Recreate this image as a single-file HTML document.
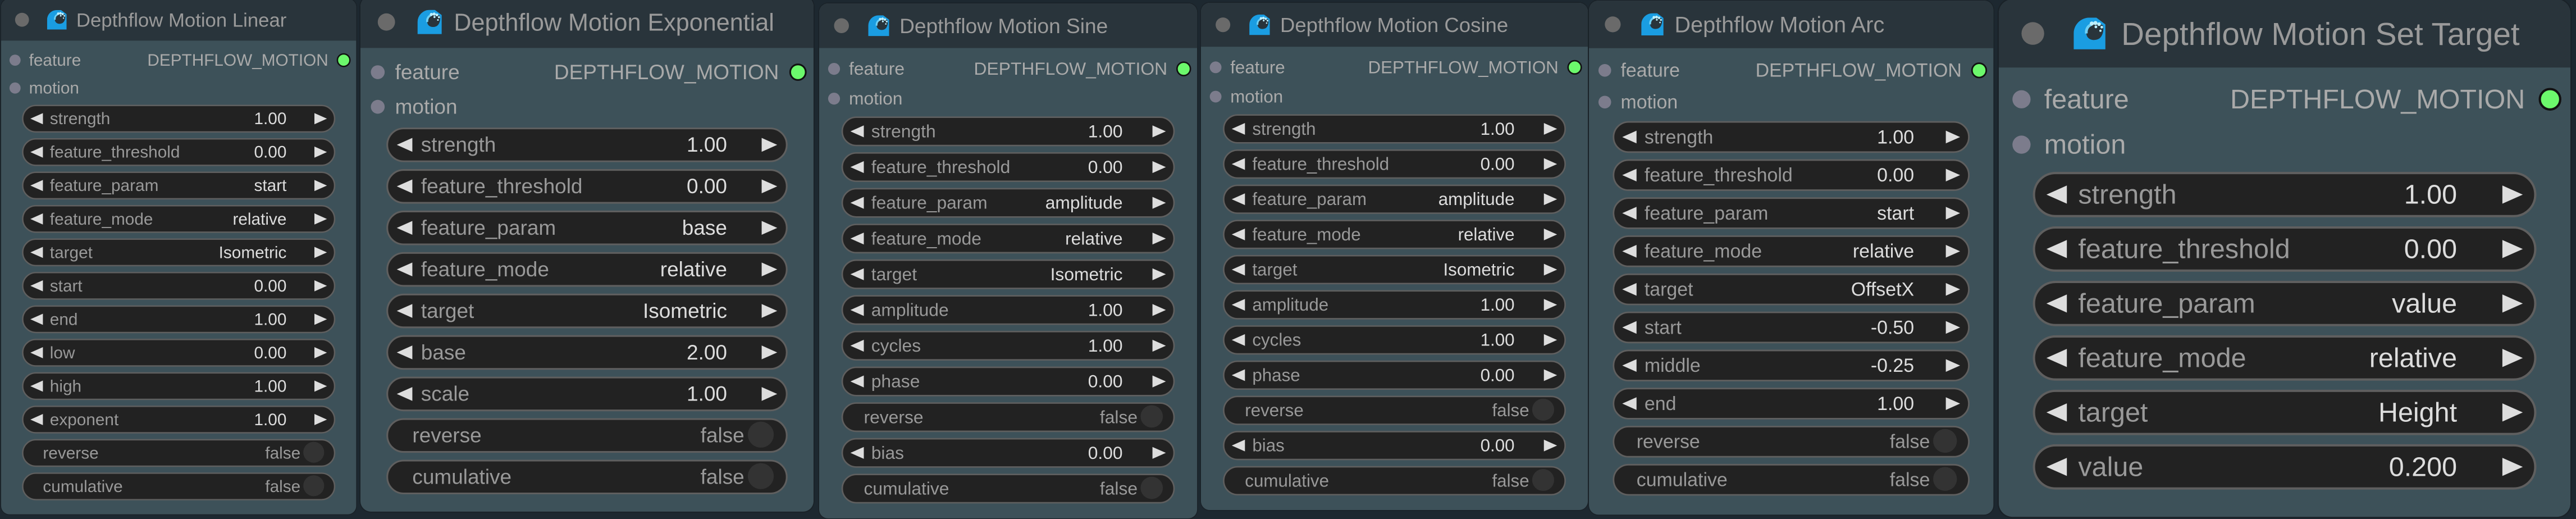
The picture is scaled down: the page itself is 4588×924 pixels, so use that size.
<!DOCTYPE html>
<html><head><meta charset="utf-8">
<style>
html,body{margin:0;padding:0;}
body{width:4588px;height:924px;overflow:hidden;background:#1d2830;position:relative;font-family:"Liberation Sans",Arial,sans-serif;}
.node{position:absolute;transform-origin:0 0;background:#3d5159;border-radius:6px;box-shadow:0 0 0 0.6px #1a2228;}
.title{position:absolute;left:0;top:0;right:0;height:30px;background:#29343b;border-radius:6px 6px 0 0;}
.tdot{position:absolute;left:10px;top:10px;width:10px;height:10px;border-radius:50%;background:#6a6a6a;}
.icon{position:absolute;left:33px;top:8px;width:14px;height:14px;}
.ttext{position:absolute;left:54px;top:0;line-height:30px;font-size:14px;color:#9a9a9a;white-space:nowrap;}
.slot{position:absolute;left:0;right:0;height:20px;font-size:12px;line-height:20px;color:#aaa;}
.slot .d{position:absolute;left:6px;top:6px;width:8px;height:8px;border-radius:50%;background:#7c7c8c;}
.slot .l{position:absolute;left:20px;top:0;}
.slot .o{position:absolute;right:20px;top:0;color:#aaa;}
.slot .od{position:absolute;right:4px;top:5px;width:8px;height:8px;border-radius:50%;background:#6cf86c;border:1px solid #111;}
.w{position:absolute;left:15px;right:15px;height:20px;border-radius:10px;background:#222;border:1px solid #5f5f5f;box-sizing:border-box;font-size:12px;line-height:18px;color:#999;white-space:nowrap;}
.w .la{position:absolute;left:5px;top:5px;width:0;height:0;border-top:4px solid transparent;border-bottom:4px solid transparent;border-right:9px solid #ddd;}
.w .ra{position:absolute;right:5px;top:5px;width:0;height:0;border-top:4px solid transparent;border-bottom:4px solid transparent;border-left:9px solid #ddd;}
.w .lb{position:absolute;left:19px;top:0;}
.w .v{position:absolute;right:34px;top:0;color:#ddd;}
.w.t .lb{left:14px;}
.w.t .v{right:24px;color:#999;}
.w.t .c{position:absolute;right:7px;top:1px;width:15px;height:15px;border-radius:50%;background:#333;}
</style></head><body>

<svg width="0" height="0" style="position:absolute">
<defs>
<symbol id="wave" viewBox="0 0 14 14">
<path d="M0 14 V7 A7 7 0 0 1 7 0 H10 L14 3 V14 Z" fill="#1a9de2"/>
<path d="M13 3.5 C10.5 1.8 6 2.5 5.6 6.5 C5.4 9.5 8.5 10.6 11 9.4 C12.6 8.5 13.4 6 13 3.5Z" fill="#29343b"/>
<path d="M8 3 C6.2 3.6 5.4 5.2 5.6 7" stroke="#6fd0f5" stroke-width="1.2" fill="none"/>
<circle cx="8" cy="2.6" r="0.9" fill="#bdf0ff"/><circle cx="9.6" cy="2.4" r="0.9" fill="#bdf0ff"/><circle cx="11.2" cy="2.9" r="0.8" fill="#bdf0ff"/><circle cx="12.4" cy="4.2" r="0.6" fill="#bdf0ff"/><circle cx="11.8" cy="5.8" r="0.5" fill="#bdf0ff"/><circle cx="9.8" cy="4.1" r="0.6" fill="#bdf0ff"/>
</symbol>
</defs></svg>

<!-- Node 1 -->
<div class="node" style="left:2px;top:-2.5px;width:255px;height:370px;transform:scale(2.48);">
<div class="title"><div class="tdot"></div><svg class="icon"><use href="#wave"/></svg><div class="ttext">Depthflow Motion Linear</div></div>
<div class="slot" style="top:34px"><div class="d"></div><div class="l">feature</div><div class="o">DEPTHFLOW_MOTION</div><div class="od"></div></div>
<div class="slot" style="top:54px"><div class="d"></div><div class="l">motion</div></div>
<div class="w" style="top:76px"><div class="la"></div><div class="lb">strength</div><div class="v">1.00</div><div class="ra"></div></div>
<div class="w" style="top:100px"><div class="la"></div><div class="lb">feature_threshold</div><div class="v">0.00</div><div class="ra"></div></div>
<div class="w" style="top:124px"><div class="la"></div><div class="lb">feature_param</div><div class="v">start</div><div class="ra"></div></div>
<div class="w" style="top:148px"><div class="la"></div><div class="lb">feature_mode</div><div class="v">relative</div><div class="ra"></div></div>
<div class="w" style="top:172px"><div class="la"></div><div class="lb">target</div><div class="v">Isometric</div><div class="ra"></div></div>
<div class="w" style="top:196px"><div class="la"></div><div class="lb">start</div><div class="v">0.00</div><div class="ra"></div></div>
<div class="w" style="top:220px"><div class="la"></div><div class="lb">end</div><div class="v">1.00</div><div class="ra"></div></div>
<div class="w" style="top:244px"><div class="la"></div><div class="lb">low</div><div class="v">0.00</div><div class="ra"></div></div>
<div class="w" style="top:268px"><div class="la"></div><div class="lb">high</div><div class="v">1.00</div><div class="ra"></div></div>
<div class="w" style="top:292px"><div class="la"></div><div class="lb">exponent</div><div class="v">1.00</div><div class="ra"></div></div>
<div class="w t" style="top:316px"><div class="lb">reverse</div><div class="v">false</div><div class="c"></div></div>
<div class="w t" style="top:340px"><div class="lb">cumulative</div><div class="v">false</div><div class="c"></div></div>
</div>

<!-- Node 2 -->
<div class="node" style="left:642px;top:-7px;width:262px;height:298px;transform:scale(3.08);">
<div class="title"><div class="tdot"></div><svg class="icon"><use href="#wave"/></svg><div class="ttext">Depthflow Motion Exponential</div></div>
<div class="slot" style="top:34px"><div class="d"></div><div class="l">feature</div><div class="o">DEPTHFLOW_MOTION</div><div class="od"></div></div>
<div class="slot" style="top:54px"><div class="d"></div><div class="l">motion</div></div>
<div class="w" style="top:76px"><div class="la"></div><div class="lb">strength</div><div class="v">1.00</div><div class="ra"></div></div>
<div class="w" style="top:100px"><div class="la"></div><div class="lb">feature_threshold</div><div class="v">0.00</div><div class="ra"></div></div>
<div class="w" style="top:124px"><div class="la"></div><div class="lb">feature_param</div><div class="v">base</div><div class="ra"></div></div>
<div class="w" style="top:148px"><div class="la"></div><div class="lb">feature_mode</div><div class="v">relative</div><div class="ra"></div></div>
<div class="w" style="top:172px"><div class="la"></div><div class="lb">target</div><div class="v">Isometric</div><div class="ra"></div></div>
<div class="w" style="top:196px"><div class="la"></div><div class="lb">base</div><div class="v">2.00</div><div class="ra"></div></div>
<div class="w" style="top:220px"><div class="la"></div><div class="lb">scale</div><div class="v">1.00</div><div class="ra"></div></div>
<div class="w t" style="top:244px"><div class="lb">reverse</div><div class="v">false</div><div class="c"></div></div>
<div class="w t" style="top:268px"><div class="lb">cumulative</div><div class="v">false</div><div class="c"></div></div>
</div>

<!-- Node 3 -->
<div class="node" style="left:1459px;top:5.6px;width:254px;height:346px;transform:scale(2.65);">
<div class="title"><div class="tdot"></div><svg class="icon"><use href="#wave"/></svg><div class="ttext">Depthflow Motion Sine</div></div>
<div class="slot" style="top:34px"><div class="d"></div><div class="l">feature</div><div class="o">DEPTHFLOW_MOTION</div><div class="od"></div></div>
<div class="slot" style="top:54px"><div class="d"></div><div class="l">motion</div></div>
<div class="w" style="top:76px"><div class="la"></div><div class="lb">strength</div><div class="v">1.00</div><div class="ra"></div></div>
<div class="w" style="top:100px"><div class="la"></div><div class="lb">feature_threshold</div><div class="v">0.00</div><div class="ra"></div></div>
<div class="w" style="top:124px"><div class="la"></div><div class="lb">feature_param</div><div class="v">amplitude</div><div class="ra"></div></div>
<div class="w" style="top:148px"><div class="la"></div><div class="lb">feature_mode</div><div class="v">relative</div><div class="ra"></div></div>
<div class="w" style="top:172px"><div class="la"></div><div class="lb">target</div><div class="v">Isometric</div><div class="ra"></div></div>
<div class="w" style="top:196px"><div class="la"></div><div class="lb">amplitude</div><div class="v">1.00</div><div class="ra"></div></div>
<div class="w" style="top:220px"><div class="la"></div><div class="lb">cycles</div><div class="v">1.00</div><div class="ra"></div></div>
<div class="w" style="top:244px"><div class="la"></div><div class="lb">phase</div><div class="v">0.00</div><div class="ra"></div></div>
<div class="w t" style="top:268px"><div class="lb">reverse</div><div class="v">false</div><div class="c"></div></div>
<div class="w" style="top:292px"><div class="la"></div><div class="lb">bias</div><div class="v">0.00</div><div class="ra"></div></div>
<div class="w t" style="top:316px"><div class="lb">cumulative</div><div class="v">false</div><div class="c"></div></div>
</div>

<!-- Node 4 -->
<div class="node" style="left:2139px;top:5px;width:264px;height:346px;transform:scale(2.61);">
<div class="title"><div class="tdot"></div><svg class="icon"><use href="#wave"/></svg><div class="ttext">Depthflow Motion Cosine</div></div>
<div class="slot" style="top:34px"><div class="d"></div><div class="l">feature</div><div class="o">DEPTHFLOW_MOTION</div><div class="od"></div></div>
<div class="slot" style="top:54px"><div class="d"></div><div class="l">motion</div></div>
<div class="w" style="top:76px"><div class="la"></div><div class="lb">strength</div><div class="v">1.00</div><div class="ra"></div></div>
<div class="w" style="top:100px"><div class="la"></div><div class="lb">feature_threshold</div><div class="v">0.00</div><div class="ra"></div></div>
<div class="w" style="top:124px"><div class="la"></div><div class="lb">feature_param</div><div class="v">amplitude</div><div class="ra"></div></div>
<div class="w" style="top:148px"><div class="la"></div><div class="lb">feature_mode</div><div class="v">relative</div><div class="ra"></div></div>
<div class="w" style="top:172px"><div class="la"></div><div class="lb">target</div><div class="v">Isometric</div><div class="ra"></div></div>
<div class="w" style="top:196px"><div class="la"></div><div class="lb">amplitude</div><div class="v">1.00</div><div class="ra"></div></div>
<div class="w" style="top:220px"><div class="la"></div><div class="lb">cycles</div><div class="v">1.00</div><div class="ra"></div></div>
<div class="w" style="top:244px"><div class="la"></div><div class="lb">phase</div><div class="v">0.00</div><div class="ra"></div></div>
<div class="w t" style="top:268px"><div class="lb">reverse</div><div class="v">false</div><div class="c"></div></div>
<div class="w" style="top:292px"><div class="la"></div><div class="lb">bias</div><div class="v">0.00</div><div class="ra"></div></div>
<div class="w t" style="top:316px"><div class="lb">cumulative</div><div class="v">false</div><div class="c"></div></div>
</div>

<!-- Node 5 -->
<div class="node" style="left:2830px;top:1.3px;width:255px;height:324px;transform:scale(2.825);">
<div class="title"><div class="tdot"></div><svg class="icon"><use href="#wave"/></svg><div class="ttext">Depthflow Motion Arc</div></div>
<div class="slot" style="top:34px"><div class="d"></div><div class="l">feature</div><div class="o">DEPTHFLOW_MOTION</div><div class="od"></div></div>
<div class="slot" style="top:54px"><div class="d"></div><div class="l">motion</div></div>
<div class="w" style="top:76px"><div class="la"></div><div class="lb">strength</div><div class="v">1.00</div><div class="ra"></div></div>
<div class="w" style="top:100px"><div class="la"></div><div class="lb">feature_threshold</div><div class="v">0.00</div><div class="ra"></div></div>
<div class="w" style="top:124px"><div class="la"></div><div class="lb">feature_param</div><div class="v">start</div><div class="ra"></div></div>
<div class="w" style="top:148px"><div class="la"></div><div class="lb">feature_mode</div><div class="v">relative</div><div class="ra"></div></div>
<div class="w" style="top:172px"><div class="la"></div><div class="lb">target</div><div class="v">OffsetX</div><div class="ra"></div></div>
<div class="w" style="top:196px"><div class="la"></div><div class="lb">start</div><div class="v">-0.50</div><div class="ra"></div></div>
<div class="w" style="top:220px"><div class="la"></div><div class="lb">middle</div><div class="v">-0.25</div><div class="ra"></div></div>
<div class="w" style="top:244px"><div class="la"></div><div class="lb">end</div><div class="v">1.00</div><div class="ra"></div></div>
<div class="w t" style="top:268px"><div class="lb">reverse</div><div class="v">false</div><div class="c"></div></div>
<div class="w t" style="top:292px"><div class="lb">cumulative</div><div class="v">false</div><div class="c"></div></div>
</div>

<!-- Node 6 -->
<div class="node" style="left:3560px;top:-1px;width:252px;height:228px;transform:scale(4.04);">
<div class="title"><div class="tdot"></div><svg class="icon"><use href="#wave"/></svg><div class="ttext">Depthflow Motion Set Target</div></div>
<div class="slot" style="top:34px"><div class="d"></div><div class="l">feature</div><div class="o">DEPTHFLOW_MOTION</div><div class="od"></div></div>
<div class="slot" style="top:54px"><div class="d"></div><div class="l">motion</div></div>
<div class="w" style="top:76px"><div class="la"></div><div class="lb">strength</div><div class="v">1.00</div><div class="ra"></div></div>
<div class="w" style="top:100px"><div class="la"></div><div class="lb">feature_threshold</div><div class="v">0.00</div><div class="ra"></div></div>
<div class="w" style="top:124px"><div class="la"></div><div class="lb">feature_param</div><div class="v">value</div><div class="ra"></div></div>
<div class="w" style="top:148px"><div class="la"></div><div class="lb">feature_mode</div><div class="v">relative</div><div class="ra"></div></div>
<div class="w" style="top:172px"><div class="la"></div><div class="lb">target</div><div class="v">Height</div><div class="ra"></div></div>
<div class="w" style="top:196px"><div class="la"></div><div class="lb">value</div><div class="v">0.200</div><div class="ra"></div></div>
</div>

</body></html>
